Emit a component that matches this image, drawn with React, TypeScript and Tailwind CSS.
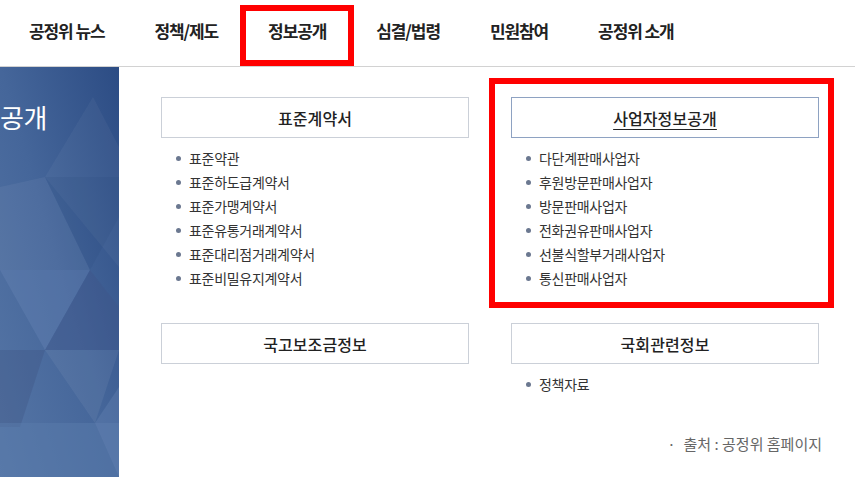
const menus = ['공정위 뉴스', '정책/제도', '정보공개', '심결/법령', '민원참여', '공정위 소개']

const sections = [
  {
    title: '표준계약서',
    items: ['표준약관', '표준하도급계약서', '표준가맹계약서', '표준유통거래계약서', '표준대리점거래계약서', '표준비밀유지계약서'],
  },
  {
    title: '사업자정보공개',
    active: true,
    items: ['다단계판매사업자', '후원방문판매사업자', '방문판매사업자', '전화권유판매사업자', '선불식할부거래사업자', '통신판매사업자'],
  },
  { title: '국고보조금정보', items: [] as string[] },
  { title: '국회관련정보', items: ['정책자료'] },
]

function SideArt() {
  return (
    <svg className="absolute inset-0" width="119" height="410" viewBox="0 0 119 410" preserveAspectRatio="none">
      <defs>
        <linearGradient id="bg" x1="1" y1="0" x2="0" y2="1">
          <stop offset="0" stopColor="#2c4c84" />
          <stop offset="0.5" stopColor="#45669a" />
          <stop offset="1" stopColor="#5676a6" />
        </linearGradient>
      </defs>
      <rect width="119" height="410" fill="url(#bg)" />
      <polygon points="45,110 93,30 119,80 119,200" fill="#ffffff" opacity="0.04" />
      <polygon points="0,120 45,110 90,203 0,203" fill="#ffffff" opacity="0.05" />
      <polygon points="45,110 90,203 119,150 119,110" fill="#1f3f75" opacity="0.12" />
      <polygon points="0,203 90,203 45,283" fill="#6a88b6" opacity="0.35" />
      <polygon points="45,283 90,203 119,240 119,283" fill="#3f5386" opacity="0.35" />
      <polygon points="0,283 45,283 20,360 0,360" fill="#3c507f" opacity="0.3" />
      <polygon points="45,283 119,283 95,356" fill="#ffffff" opacity="0.06" />
      <polygon points="0,356 119,356 119,410 0,410" fill="#5a7bab" opacity="0.5" />
      <polygon points="95,356 119,320 119,410" fill="#6483b2" opacity="0.4" />
    </svg>
  )
}

export default function App() {
  return (
    <div className="relative h-screen flex flex-col bg-white font-['Noto_Sans_CJK_KR','Noto_Sans',sans-serif] overflow-hidden">
      <nav className="h-[67px] shrink-0 border-b border-[#d2d2d2] flex items-center gap-[50px] pl-[29px] pb-[5px]">
        {menus.map((m) => (
          <span key={m} className="text-[17px] font-bold tracking-[-1.1px] text-[#222]">
            {m}
          </span>
        ))}
      </nav>

      <div className="flex flex-1">
        <aside className="relative w-[119px] shrink-0 overflow-hidden">
          <SideArt />
          <p className="relative pt-[33px] text-[26px] leading-[34px] text-white tracking-[-0.5px]">공개</p>
        </aside>

        <main className="pl-[42px] pt-[30px]">
          <div className="grid grid-cols-[308px_308px] gap-x-[42px] gap-y-[33px]">
            {sections.map((s) => (
              <div key={s.title}>
                <div
                  className={`h-[41px] border flex items-center justify-center text-[16px] font-medium tracking-[0.1px] text-[#222] ${
                    s.active ? 'border-[#8ea2c2] underline underline-offset-[4px]' : 'border-[#cbd0d8]'
                  }`}
                >
                  {s.title}
                </div>
                {s.items.length > 0 && (
                  <ul className="mt-[8px] pl-[15px]">
                    {s.items.map((it) => (
                      <li key={it} className="flex items-center h-[24px] text-[14px] tracking-[-0.3px] text-[#333]">
                        <span className="w-[5px] h-[5px] rounded-full bg-[#6b7890] mr-[8px]" />
                        {it}
                      </li>
                    ))}
                  </ul>
                )}
              </div>
            ))}
          </div>
          <div className="w-[661px] flex justify-end mt-[38px]">
            <p className="text-[15px] leading-[20px] tracking-[0px] text-[#666]">
              <span className="mr-[8px]">·</span>출처 : 공정위 홈페이지
            </p>
          </div>
        </main>
      </div>

      <div className="absolute left-[240px] top-[5px] w-[114px] h-[61px] border-[6px] border-[#ff0000]" />
      <div className="absolute left-[489px] top-[78px] w-[345px] h-[230px] border-[6px] border-[#ff0000]" />
    </div>
  )
}
